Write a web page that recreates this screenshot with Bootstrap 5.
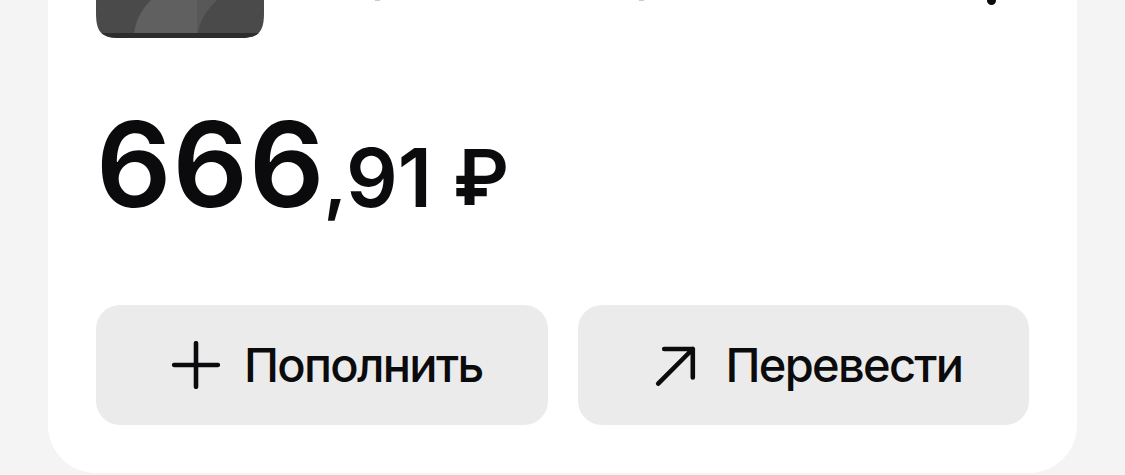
<!DOCTYPE html>
<html lang="ru">
<head>
  <meta charset="UTF-8">
  <meta name="viewport" content="width=device-width, initial-scale=1.0">
  <title>Счёт</title>
  <link href="https://cdn.jsdelivr.net/npm/bootstrap@5.3.3/dist/css/bootstrap.min.css" rel="stylesheet">
  <script src="https://cdn.jsdelivr.net/npm/bootstrap@5.3.3/dist/js/bootstrap.bundle.min.js"></script>
  <style>
    body {
      background: #f4f4f4;
      color: #0b0b0d;
      font-family: Inter, "Liberation Sans", sans-serif;
      height: 475px;
      overflow: hidden;
    }
    .account {
      width: 1029px;
      height: 473px;
      margin-left: 48px;
      padding: 0 48px 48px;
      border-radius: 0 0 48px 48px;
    }
    .account-top { height: 38px; }
    .account-top svg { display: block; }
    .amount {
      height: 150px;
      margin-top: 67px;
      line-height: 150px;
      font-weight: 600;
      white-space: nowrap;
    }
    .amount span { line-height: 1; }
    .rubles { font-size: 118px; letter-spacing: 1px; }
    .comma { font-size: 74px; margin-left: -2px; }
    .kopecks { font-size: 81px; margin-left: -1px; }
    .currency { font-size: 77px; margin-left: 21px; vertical-align: 2px; }
    .actions { gap: 30px; }
    .action {
      height: 120px;
      border: 0;
      border-radius: 24px;
      background: #ebebeb;
      color: #0b0b0d;
      font-size: 47px;
      font-weight: 500;
      line-height: 1;
      letter-spacing: -1.7px;
      padding: 0 0 0 76px;
      gap: 24px;
    }
    .action span { margin-top: -1px; }
    .action svg { flex: none; }
  </style>
</head>
<body>

  <div class="account bg-white d-flex flex-column">
    <!-- Card picture, title descenders and menu dot -->
    <div class="account-top">
      <svg width="933" height="38" viewBox="0 0 933 38">
        <clipPath id="plate"><path d="M0 0H168V13C168 33 162 38 143 38H25C6 38 0 33 0 13Z"/></clipPath>
        <g clip-path="url(#plate)">
          <rect width="168" height="38" fill="#4a4a4b"/>
          <path d="M55 0Q38 17 38 38H101V0Z" fill="#606061"/>
          <path d="M101 0H121Q103 17 101 38Z" fill="#585858"/>
          <rect y="33" width="168" height="5" fill="#2d2d2e"/>
        </g>
        <path d="M279 0h5M543 0h5" stroke="#bbb" stroke-width="1.5"/>
        <circle cx="895.5" cy=".5" r="4.5" fill="#0b0b0d"/>
      </svg>
    </div>

    <!-- Balance -->
    <div class="amount"><span class="rubles">666</span><span class="comma">,</span><span class="kopecks">91</span><span class="currency">₽</span></div>

    <!-- Actions -->
    <div class="actions d-flex mt-auto">
      <button type="button" class="action btn d-flex align-items-center flex-fill w-50">
        <svg width="48" height="48" viewBox="0 0 48 48" fill="none" stroke="currentColor" stroke-width="4.6" stroke-linecap="round"><path d="M24 2.2V45.8M2.2 24H45.8"/></svg>
        <span>Пополнить</span>
      </button>
      <button type="button" class="action btn d-flex align-items-center flex-fill w-50">
        <svg width="48" height="48" viewBox="0 0 48 48" fill="none" stroke="currentColor" stroke-width="4.6" stroke-linecap="round" stroke-linejoin="round"><path d="M10.2 8H38.8V36.5M38.8 8L4.2 42.7"/></svg>
        <span>Перевести</span>
      </button>
    </div>
  </div>

</body>
</html>
